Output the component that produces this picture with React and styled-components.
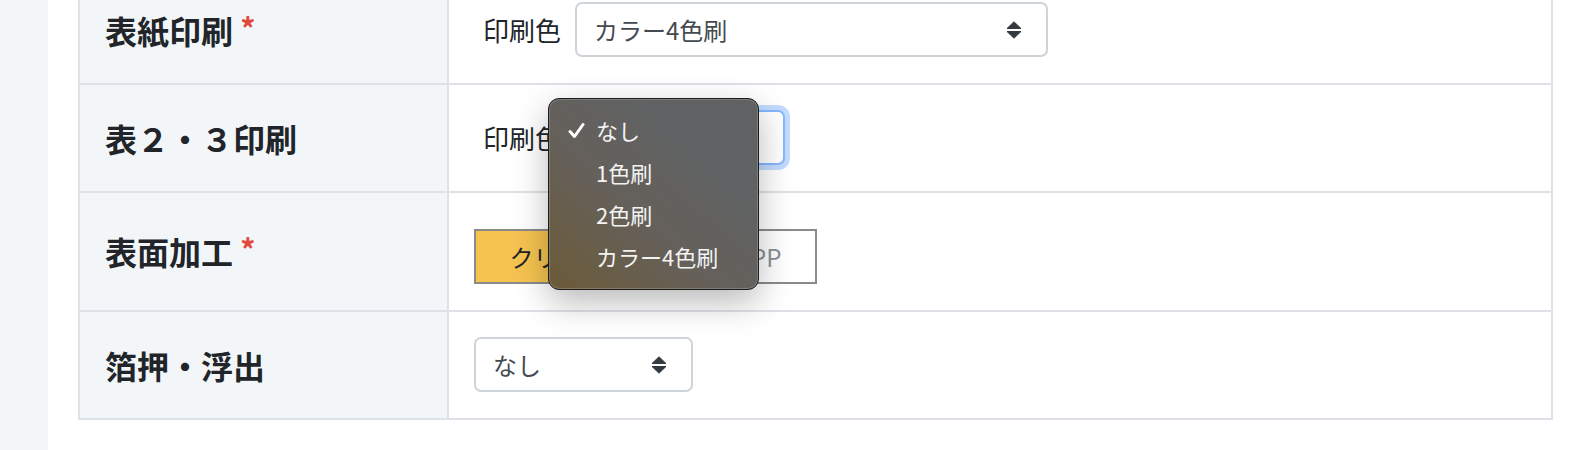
import styled, { createGlobalStyle } from 'styled-components';

const GlobalStyle = createGlobalStyle`
  html, body {
    margin: 0;
    padding: 0;
    background: #fff;
    overflow: hidden;
  }
  body {
    font-family: "Noto Sans CJK JP", "Noto Sans", sans-serif;
    color: #212529;
  }
`;

const Arrows = () => (
  <svg width="16" height="18" viewBox="0 0 16 18">
    <path d="M1 7.5 L8 0.8 L15 7.5 Z" fill="#343a40" stroke="#343a40" strokeLinejoin="round" strokeWidth="1" />
    <path d="M1 10.5 L15 10.5 L8 17.2 Z" fill="#343a40" stroke="#343a40" strokeLinejoin="round" strokeWidth="1" />
  </svg>
);

const Check = () => (
  <svg width="17" height="17" viewBox="0 0 17 17">
    <path d="M2 9.5 L6.5 14.5 L15 2.5" fill="none" stroke="#fff" strokeWidth="3" strokeLinecap="round" strokeLinejoin="round" />
  </svg>
);

const options = ['なし', '1色刷', '2色刷', 'カラー4色刷'];

const App = () => {
  return (
    <>
      <GlobalStyle />
      <Page>
        <Sidebar />
        <Main>
          <Table>
            <colgroup>
              <col style={{ width: 369 }} />
              <col />
            </colgroup>
            <tbody>
              <tr>
                <Label>表紙印刷 <Req>*</Req></Label>
                <Cell>
                  <Field>
                    <FieldName>印刷色</FieldName>
                    <Select $width={473}>
                      <span>カラー4色刷</span>
                      <Arrows />
                    </Select>
                  </Field>
                </Cell>
              </tr>
              <tr>
                <Label>表２・３印刷</Label>
                <Cell>
                  <Field>
                    <FieldName>印刷色</FieldName>
                    <Select $width={210} $focused>
                      <span>なし</span>
                      <Arrows />
                    </Select>
                    <Menu>
                      {options.map((opt, i) => (
                        <MenuItem key={opt}>
                          <CheckSlot>{i === 0 && <Check />}</CheckSlot>
                          {opt}
                        </MenuItem>
                      ))}
                    </Menu>
                  </Field>
                </Cell>
              </tr>
              <tr>
                <Label>表面加工 <Req>*</Req></Label>
                <Cell>
                  <Segmented>
                    <Segment $active>クリアPP</Segment>
                    <Segment>マットPP</Segment>
                  </Segmented>
                </Cell>
              </tr>
              <tr>
                <Label>箔押・浮出</Label>
                <Cell>
                  <Select $width={219}>
                    <span>なし</span>
                    <Arrows />
                  </Select>
                </Cell>
              </tr>
            </tbody>
          </Table>
        </Main>
      </Page>
    </>
  );
};

const Page = styled.div`
  display: flex;
  min-height: 450px;
`;

const Sidebar = styled.div`
  width: 48px;
  flex-shrink: 0;
  background: #f2f6f8;
`;

const Main = styled.main`
  flex: 1;
  padding: 0 43px 0 30px;
`;

const Table = styled.table`
  width: 100%;
  margin-top: -25px;
  border-collapse: collapse;
  table-layout: fixed;
  border: 2px solid #dee2e6;
`;

const Label = styled.th`
  background: #f2f6f8;
  border: 2px solid #dee2e6;
  padding: 25px 25px 26px;
  text-align: left;
  vertical-align: middle;
  font-size: 32px;
  font-weight: 700;
  color: #212529;
  white-space: nowrap;
`;

const Req = styled.span`
  color: #e2483b;
  font-size: 30px;
  position: relative;
  top: -4px;
`;

const Cell = styled.td`
  border: 2px solid #dee2e6;
  padding: 25px 25px 26px;
  vertical-align: middle;
`;

const Field = styled.div`
  position: relative;
  display: flex;
  align-items: center;
  gap: 14px;
  padding-left: 9px;
`;

const FieldName = styled.span`
  font-size: 26px;
  color: #212529;
`;

const Select = styled.div`
  box-sizing: border-box;
  width: ${props => props.$width}px;
  height: 55px;
  display: flex;
  align-items: center;
  justify-content: space-between;
  padding: 0 24px 0 17px;
  border: 2px solid ${props => props.$focused ? '#86b7fe' : '#ced4da'};
  border-radius: 7px;
  background: #fff;
  font-size: 24px;
  color: #444a50;
  box-shadow: ${props => props.$focused ? '0 0 0 5px rgba(13, 110, 253, 0.25)' : 'none'};
`;

const Menu = styled.div`
  position: absolute;
  left: 74px;
  top: -12px;
  width: 211px;
  box-sizing: border-box;
  padding: 10px 0 12px;
  border-radius: 11px;
  border: 1px solid #1c1c1c;
  background: linear-gradient(to top right, #6c5b38 0%, #65605a 40%, #606263 70%, #5f6163 100%);
  box-shadow: inset 0 0 0 1px rgba(255, 255, 255, 0.18), 0 12px 34px rgba(0, 0, 0, 0.28);
  z-index: 10;
`;

const MenuItem = styled.div`
  display: flex;
  align-items: center;
  height: 42px;
  padding-left: 19px;
  font-size: 22px;
  color: #f3f3f3;
`;

const CheckSlot = styled.span`
  display: inline-flex;
  width: 28px;
`;

const Segmented = styled.div`
  display: flex;
  width: 343px;
  height: 55px;
  box-sizing: border-box;
  margin-top: 11px;
  border: 2px solid #8a8a8a;
`;

const Segment = styled.div`
  flex: 1;
  display: flex;
  align-items: center;
  justify-content: center;
  font-size: 24px;
  background: ${props => props.$active ? '#f5c350' : '#fff'};
  color: ${props => props.$active ? '#212529' : '#8a9096'};
`;

export default App;
